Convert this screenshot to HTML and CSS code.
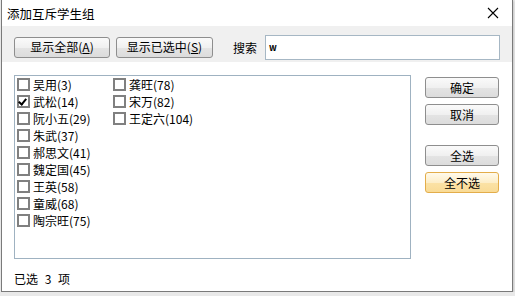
FILE: index.html
```html
<!DOCTYPE html>
<html lang="zh-CN">

<head>
    <meta charset="UTF-8">
    <title>添加互斥学生组</title>
    <link rel="stylesheet" href="styles.css">
</head>

<body>
    <div class="window">
        <div class="titlebar">
            <span class="title">添加互斥学生组</span>
            <svg class="close" width="12" height="12" viewBox="0 0 12 12">
                <path d="M1 1 L11 11 M11 1 L1 11" stroke="#000" stroke-width="1.1" fill="none" />
            </svg>
        </div>

        <div class="toolbar">
            <div class="btn wide">显示全部(<u>A</u>)</div>
            <div class="btn wide">显示已选中(<u>S</u>)</div>
            <span class="label">搜索</span>
            <div class="search">w</div>
        </div>

        <div class="main">
            <ul class="list">
                <li><span class="chk"></span>吴用(3)</li>
                <li><span class="chk on"></span>武松(14)</li>
                <li><span class="chk"></span>阮小五(29)</li>
                <li><span class="chk"></span>朱武(37)</li>
                <li><span class="chk"></span>郝思文(41)</li>
                <li><span class="chk"></span>魏定国(45)</li>
                <li><span class="chk"></span>王英(58)</li>
                <li><span class="chk"></span>童威(68)</li>
                <li><span class="chk"></span>陶宗旺(75)</li>
                <li><span class="chk"></span>龚旺(78)</li>
                <li><span class="chk"></span>宋万(82)</li>
                <li><span class="chk"></span>王定六(104)</li>
            </ul>
            <div class="side">
                <div class="btn">确定</div>
                <div class="btn">取消</div>
                <div class="btn gap">全选</div>
                <div class="btn hot">全不选</div>
            </div>
        </div>

        <div class="status">已选 3 项</div>
    </div>
</body>

</html>
```

FILE: styles.css
```css
body {
    margin: 0;
    background: #e9e9e9;
    font-family: "Noto Sans CJK SC", "Noto Sans", sans-serif;
    font-size: 12px;
    color: #000;
}

.window {
    margin-left: 1px;
    width: 510px;
    height: 291px;
    border: 1px solid #7a7a7a;
    border-top: none;
    background: #fff;
    box-shadow: 1px 1px 2px rgba(0, 0, 0, 0.15);
}

.titlebar {
    height: 26px;
    display: flex;
    align-items: center;
    justify-content: space-between;
    padding: 0 13px 0 5px;
    background: #fff;
}

.title {
    font-size: 12.5px;
}

.toolbar {
    height: 30px;
    padding: 6px 0 0 12px;
    background: #f0f0f0;
    display: flex;
    align-items: center;
}

.btn {
    height: 19px;
    border: 1px solid #8e8e8e;
    border-radius: 3px;
    background: linear-gradient(#fafafa, #f0f0f0 50%, #e4e4e4 51%, #dcdcdc);
    display: flex;
    align-items: center;
    justify-content: center;
    line-height: 1;
}

.btn.wide {
    width: 94px;
    margin-right: 6px;
}

.btn.wide + .btn.wide {
    width: 95px;
    margin-right: 20px;
}

.label {
    margin-right: 8px;
}

.search {
    width: 230px;
    height: 23px;
    border: 1px solid #a6b7c4;
    background: #fff;
    font-size: 9px;
    font-weight: bold;
    line-height: 23px;
    padding-left: 3px;
    box-sizing: content-box;
}

.main {
    display: flex;
    padding: 13px 0 0 12px;
}

.list {
    margin: 0;
    width: 393px;
    height: 182px;
    border: 1px solid #9fb2c1;
    padding: 0 0 0 2px;
    list-style: none;
    display: grid;
    grid-template-rows: repeat(9, 17px);
    grid-auto-flow: column;
    grid-auto-columns: 96px;
    align-content: start;
}

.list li {
    display: flex;
    align-items: center;
    gap: 3px;
    white-space: nowrap;
}

.chk {
    width: 9px;
    height: 9px;
    border: 2px solid #808080;
    background: #fff;
    position: relative;
}

.chk.on::after {
    content: "";
    position: absolute;
    left: 1px;
    top: 0;
    width: 3px;
    height: 6px;
    border: solid #000;
    border-width: 0 2px 2px 0;
    transform: rotate(40deg);
}

.side {
    display: flex;
    flex-direction: column;
    margin: 2px 0 0 14px;
    gap: 6px;
}

.side .btn {
    width: 72px;
}

.side .btn.gap {
    margin-top: 14px;
}

.btn.hot {
    border-color: #e3ad4a;
    background: linear-gradient(#fffaec, #fdeec8 50%, #fbe2a6 51%, #f9db96);
}

.status {
    padding: 11px 0 0 12px;
    line-height: 17px;
    word-spacing: 4px;
}
```
